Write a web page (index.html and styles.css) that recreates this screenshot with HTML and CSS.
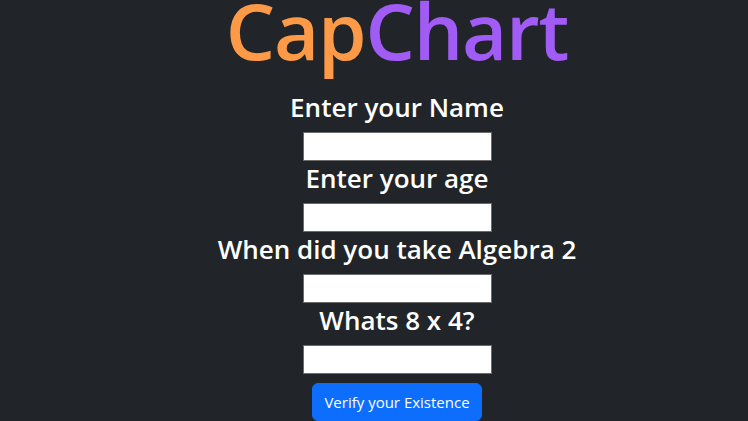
FILE: index.html
```html
<!DOCTYPE html>
<html lang="en">
<head>
<meta charset="utf-8">
<title>CapChart</title>
<link rel="stylesheet" href="styles.css">
</head>
<body>
<main class="page">
  <h1 class="logo"><span class="cap">Cap</span><span class="chart">Chart</span></h1>
  <form class="form">
    <div class="field">
      <label class="label" for="name">Enter your Name</label>
      <input class="input" id="name" type="text">
    </div>
    <div class="field">
      <label class="label" for="age">Enter your age</label>
      <input class="input" id="age" type="text">
    </div>
    <div class="field">
      <label class="label" for="alg">When did you take Algebra 2</label>
      <input class="input" id="alg" type="text">
    </div>
    <div class="field">
      <label class="label" for="math">Whats 8 x 4?</label>
      <input class="input" id="math" type="text">
    </div>
    <button class="btn" type="button">Verify your Existence</button>
  </form>
</main>
</body>
</html>
```
FILE: styles.css
```css
html, body {
  margin: 0;
  padding: 0;
  background: #212529;
}
body {
  font-family: "Open Sans", "Noto Sans", sans-serif;
  color: #ffffff;
}
.page {
  display: flex;
  flex-direction: column;
  align-items: center;
  padding-left: 46px;
}
.logo {
  margin: 0 0 30px;
  height: 60px;
  font-size: 78px;
  line-height: 60px;
  font-weight: 600;
  letter-spacing: -1.2px;
}
.cap { color: #fd9a48; }
.chart { color: #a25cf6; }
.form {
  display: flex;
  flex-direction: column;
  align-items: center;
}
.field {
  display: flex;
  flex-direction: column;
  align-items: center;
}
.label {
  display: block;
  font-size: 26px;
  line-height: 34px;
  font-weight: 600;
  margin-bottom: 8px;
}
.input {
  box-sizing: border-box;
  width: 189px;
  height: 29px;
  border: 1px solid #6b6b6b;
  background: #ffffff;
  margin: 0;
  padding: 2px 4px;
}
.btn {
  margin-top: 9px;
  box-sizing: border-box;
  width: 170px;
  height: 38px;
  background: #0d6efd;
  border: 1px solid #0d6efd;
  border-radius: 6px;
  color: #ffffff;
  font-family: "Open Sans", "Noto Sans", sans-serif;
  font-size: 15px;
  padding: 0 8px;
}
```
